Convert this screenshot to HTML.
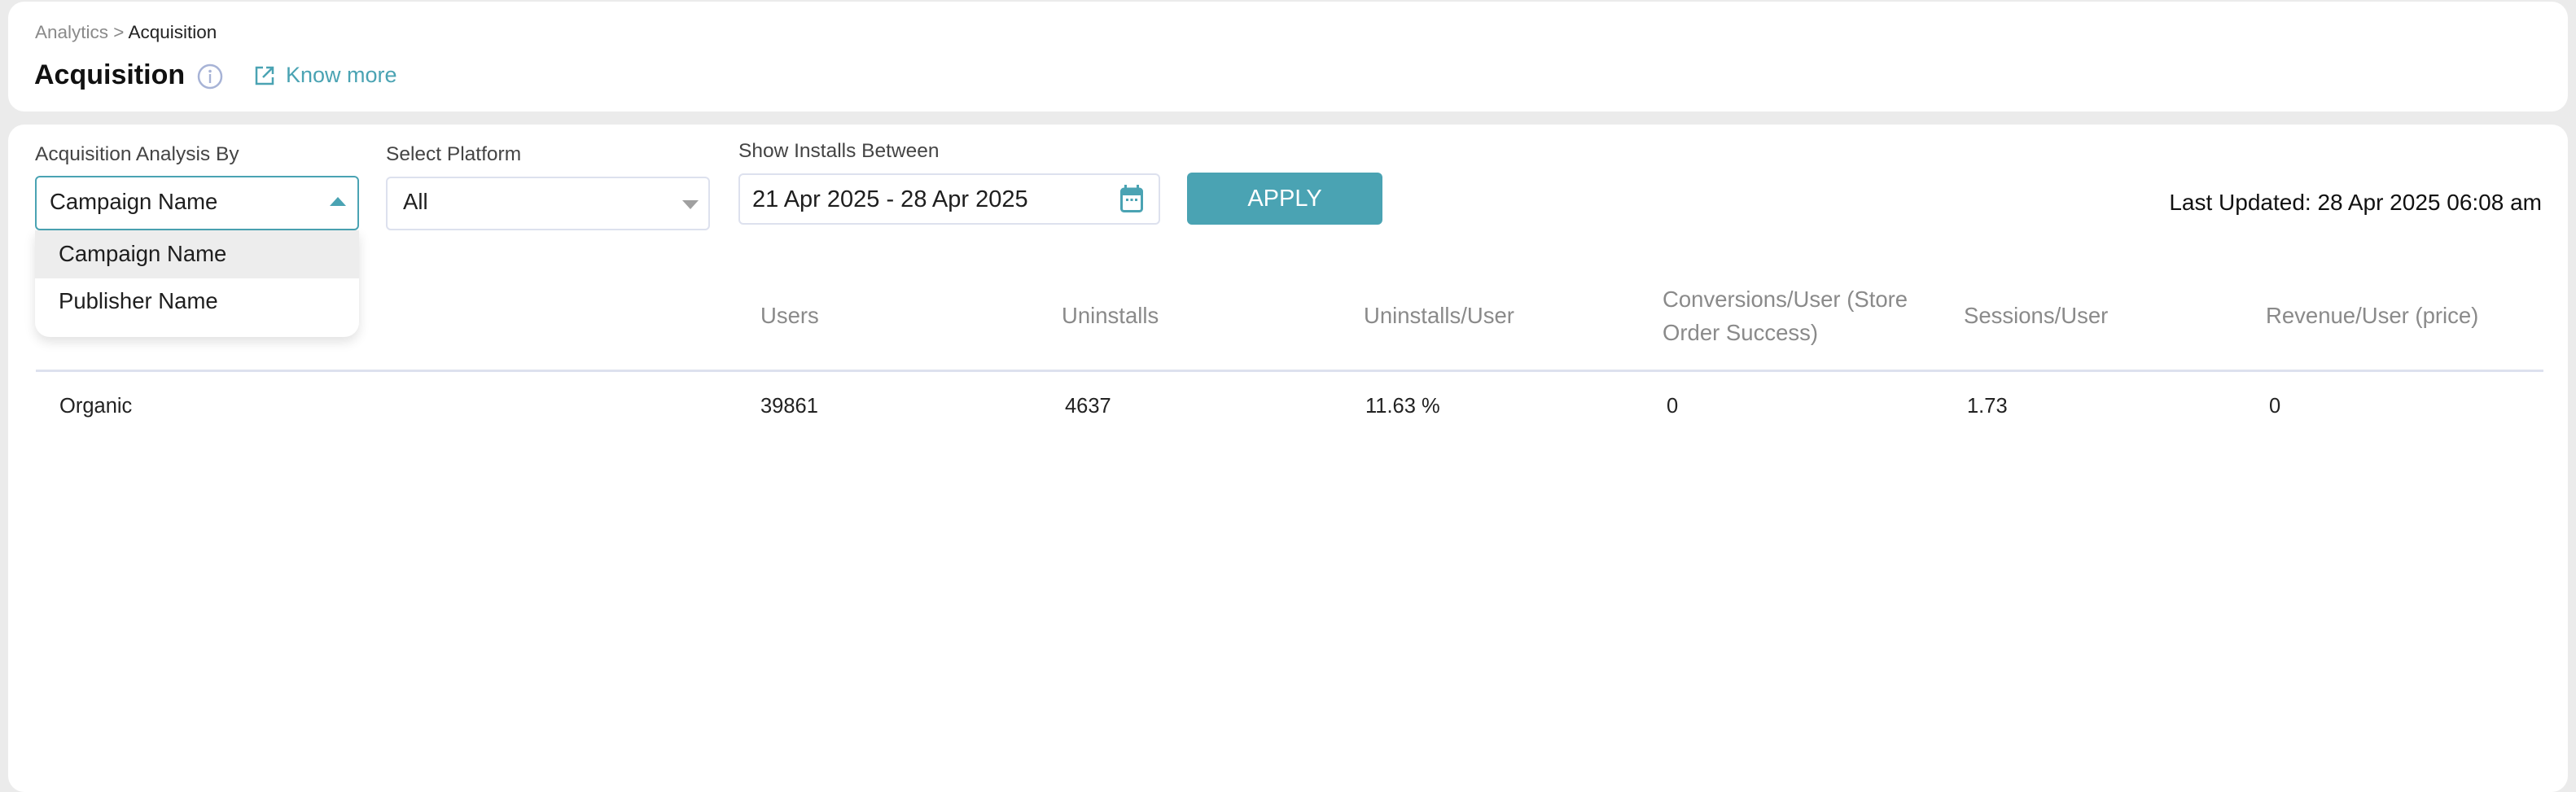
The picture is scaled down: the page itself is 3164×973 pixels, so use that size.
<!DOCTYPE html>
<html><head><meta charset="utf-8"><style>
*{box-sizing:border-box;margin:0;padding:0}
body{width:3164px;height:942px;background:#ebebeb;font-family:"Liberation Sans",sans-serif;position:relative;overflow:hidden;color:#1e1e1e}
.a{position:absolute;white-space:nowrap}
.card{position:absolute;background:#fff;border-radius:20px}
.lbl{font-size:24.5px;color:#444}
.hd{font-size:27.5px;color:#8a8a8a;line-height:41px}
.td{font-size:25.5px;color:#222}
</style></head><body>
<div class="card" style="left:10px;top:2px;width:3144px;height:135px"></div>
<div class="a" style="left:43px;top:27px;font-size:22.5px;color:#8a8a8a">Analytics &gt; <span style="color:#222">Acquisition</span></div>
<div class="a" style="left:42px;top:73px;font-size:34px;font-weight:bold;color:#111">Acquisition</div>
<svg class="a" style="left:242px;top:78px" width="32" height="32" viewBox="0 0 32 32"><circle cx="16" cy="16" r="14" fill="none" stroke="#a7b3d6" stroke-width="2.5"/><circle cx="16" cy="9.5" r="1.8" fill="#a7b3d6"/><rect x="14.8" y="13" width="2.4" height="11" fill="#a7b3d6"/></svg>
<svg class="a" style="left:312px;top:80px" width="26" height="26" viewBox="0 0 26 26" fill="none" stroke="#4aa3b3" stroke-width="2.5"><path d="M11 3H3v20h20v-8"/><path d="M15 3h8v8M23 3L11 15"/></svg>
<div class="a" style="left:351px;top:77px;font-size:27px;color:#4aa3b3">Know more</div>

<div class="card" style="left:10px;top:153px;width:3144px;height:820px"></div>
<div class="a lbl" style="left:43px;top:176px">Acquisition Analysis By</div>
<div class="a lbl" style="left:474px;top:176px">Select Platform</div>
<div class="a lbl" style="left:907px;top:172px">Show Installs Between</div>

<div class="a" style="left:43px;top:216px;width:398px;height:67px;border:2px solid #4aa3b3;border-radius:6px"></div>
<div class="a" style="left:61px;top:232px;font-size:27.5px">Campaign Name</div>
<div class="a" style="left:405px;top:242px;width:0;height:0;border-left:10px solid transparent;border-right:10px solid transparent;border-bottom:11px solid #4aa3b3"></div>

<div class="a" style="left:43px;top:283px;width:398px;height:131px;background:#fff;border-radius:0 0 18px 18px;box-shadow:0 6px 14px rgba(0,0,0,.12);overflow:hidden">
<div style="height:59px;background:#ededed"></div></div>
<div class="a" style="left:72px;top:296px;font-size:27.5px">Campaign Name</div>
<div class="a" style="left:72px;top:354px;font-size:27.5px">Publisher Name</div>

<div class="a" style="left:474px;top:217px;width:398px;height:66px;border:2px solid #dde1ee;border-radius:6px"></div>
<div class="a" style="left:495px;top:232px;font-size:27.5px">All</div>
<div class="a" style="left:838px;top:246px;width:0;height:0;border-left:10px solid transparent;border-right:10px solid transparent;border-top:11px solid #a0a0a0"></div>

<div class="a" style="left:907px;top:213px;width:518px;height:63px;border:2px solid #dde1ee;border-radius:6px"></div>
<div class="a" style="left:924px;top:229px;font-size:29px">21 Apr 2025 - 28 Apr 2025</div>
<svg class="a" style="left:1376px;top:227px" width="28" height="34" viewBox="0 0 28 34"><rect x="5" y="0" width="3" height="6" fill="#4aa3b3"/><rect x="20" y="0" width="3" height="6" fill="#4aa3b3"/><rect x="1.5" y="5" width="25" height="27.5" rx="3" fill="none" stroke="#4aa3b3" stroke-width="3"/><rect x="1.5" y="5" width="25" height="8" fill="#4aa3b3"/><rect x="7" y="17" width="3" height="3" fill="#4aa3b3"/><rect x="12.5" y="17" width="3" height="3" fill="#4aa3b3"/><rect x="18" y="17" width="3" height="3" fill="#4aa3b3"/></svg>

<div class="a" style="left:1458px;top:212px;width:240px;height:64px;background:#4aa3b3;border-radius:6px;color:#fff;font-size:29px;text-align:center;line-height:64px">APPLY</div>

<div class="a" style="right:42px;top:233px;font-size:28px;color:#111">Last Updated: 28 Apr 2025 06:08 am</div>

<div class="a hd" style="left:934px;top:367px">Users</div>
<div class="a hd" style="left:1304px;top:367px">Uninstalls</div>
<div class="a hd" style="left:1675px;top:367px">Uninstalls/User</div>
<div class="a hd" style="left:2042px;top:347px">Conversions/User (Store<br>Order Success)</div>
<div class="a hd" style="left:2412px;top:367px">Sessions/User</div>
<div class="a hd" style="left:2783px;top:367px">Revenue/User (price)</div>
<div class="a" style="left:44px;top:454px;width:3080px;height:3px;background:#dde1ee"></div>

<div class="a td" style="left:73px;top:485px">Organic</div>
<div class="a td" style="left:934px;top:485px">39861</div>
<div class="a td" style="left:1308px;top:485px">4637</div>
<div class="a td" style="left:1677px;top:485px">11.63 %</div>
<div class="a td" style="left:2047px;top:485px">0</div>
<div class="a td" style="left:2416px;top:485px">1.73</div>
<div class="a td" style="left:2787px;top:485px">0</div>
</body></html>
